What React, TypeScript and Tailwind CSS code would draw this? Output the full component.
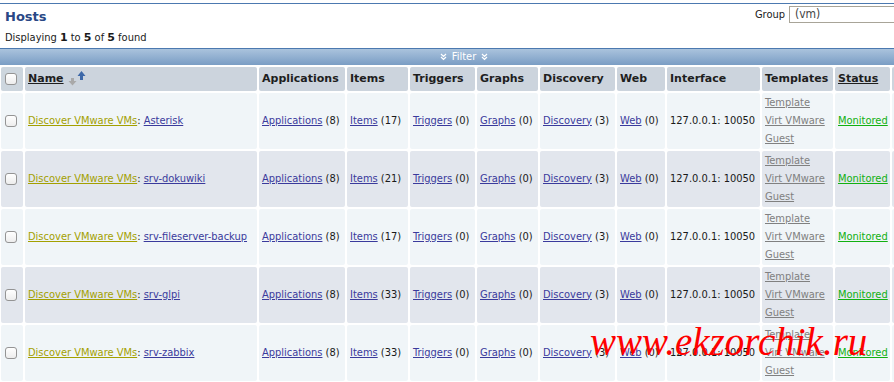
import React from "react";

const hosts = [
  { name: "Asterisk", items: 17 },
  { name: "srv-dokuwiki", items: 21 },
  { name: "srv-fileserver-backup", items: 17 },
  { name: "srv-glpi", items: 33 },
  { name: "srv-zabbix", items: 33 },
];

const body = "font-['DejaVu_Sans_Condensed','Liberation_Sans',sans-serif] text-[11px]";
const bold = "font-['DejaVu_Sans',sans-serif] font-bold text-[11px]";

function Checkbox() {
  return (
    <span className="block w-[12px] h-[12px] ml-[4px] rounded-[3px] border border-[#949494] bg-gradient-to-b from-white to-[#ededed]" />
  );
}

function SortArrows() {
  return (
    <svg width="18" height="16" viewBox="0 0 18 16" className="inline-block align-[-4px] ml-[4px]">
      <path d="M3 8v3H0.5L4.5 15.5l4-4.5H6V8z" fill="#a9a9a9" />
      <path d="M12 10V6H9.5L13.5 1l4 5H15v4z" fill="#3d68a8" />
    </svg>
  );
}

function Chevrons() {
  return (
    <svg width="7" height="8" viewBox="0 0 7 8" className="inline-block">
      <path d="M1 1l2.5 2.5L6 1M1 4l2.5 2.5L6 4" stroke="#fff" strokeWidth="1.2" fill="none" />
    </svg>
  );
}

function Link({ children, className = "text-[#3a3a9c]" }: { children: React.ReactNode; className?: string }) {
  return <a className={`underline ${className}`}>{children}</a>;
}

export default function App() {
  const th = `${bold} text-[#1e1e1e] bg-[#ccd4dd] rounded-[2px] px-[3px] h-[24px] text-left whitespace-nowrap`;
  return (
    <div className={`relative w-[894px] h-[382px] overflow-hidden bg-white text-[#1a1a1a] ${body}`}>
      <div className="w-[928px]">
        <div className="mt-[3px] h-[46px] border-y border-[#4c79b0] flex justify-between px-[5px]">
          <div>
            <div className="pt-[5px] font-['DejaVu_Sans',sans-serif] font-bold text-[13px] leading-[16px] text-[#2a4785]">
              Hosts
            </div>
            <div className="mt-[6px] leading-[14px]">
              Displaying <b className={bold}>1</b> to <b className={bold}>5</b> of <b className={bold}>5</b> found
            </div>
          </div>
          <div className="flex items-start gap-[4px] pt-[2px]">
            <span className="leading-[17px]">Group</span>
            <div className="w-[134px] h-[17px] border border-[#a8a498] pl-[5px] leading-[15px] text-[12px] text-[#444]">
              (vm)
            </div>
          </div>
        </div>

        <div className="h-[16px] bg-gradient-to-b from-[#aac3dd] to-[#7a9dc4] flex items-center justify-center gap-[5px] text-white">
          <Chevrons />
          <span className="leading-[14px]">Filter</span>
          <Chevrons />
        </div>

        <table className="table-fixed border-separate border-spacing-[2px] -ml-[1px] w-[930px]">
          <colgroup>
            <col className="w-[22px]" />
            <col className="w-[232px]" />
            <col className="w-[86px]" />
            <col className="w-[61px]" />
            <col className="w-[65px]" />
            <col className="w-[61px]" />
            <col className="w-[75px]" />
            <col className="w-[48px]" />
            <col className="w-[93px]" />
            <col className="w-[71px]" />
            <col className="w-[55px]" />
            <col />
          </colgroup>
          <thead>
            <tr>
              <th className="bg-[#cdd6de] rounded-[2px]">
                <Checkbox />
              </th>
              <th className={`${th} bg-[#bdc9d4]`}>
                <span className="underline">Name</span>
                <SortArrows />
              </th>
              <th className={th}>Applications</th>
              <th className={th}>Items</th>
              <th className={th}>Triggers</th>
              <th className={th}>Graphs</th>
              <th className={th}>Discovery</th>
              <th className={th}>Web</th>
              <th className={th}>Interface</th>
              <th className={th}>Templates</th>
              <th className={`${th} bg-[#bdc9d4]`}>
                <span className="underline">Status</span>
              </th>
              <th className={th}></th>
            </tr>
          </thead>
          <tbody>
            {hosts.map((h, i) => {
              const bg = i % 2 === 0 ? "bg-[#f0f5f8]" : "bg-[#e2e6ed]";
              const td = `${bg} rounded-[2px] px-[3px] h-[56px] align-middle whitespace-nowrap`;
              return (
                <tr key={h.name}>
                  <td className={`${bg} rounded-[2px] align-middle`}>
                    <Checkbox />
                  </td>
                  <td className={td}>
                    <Link className="text-[#a3a000]">Discover VMware VMs</Link>: <Link>{h.name}</Link>
                  </td>
                  <td className={td}>
                    <Link>Applications</Link> (8)
                  </td>
                  <td className={td}>
                    <Link>Items</Link> ({h.items})
                  </td>
                  <td className={td}>
                    <Link>Triggers</Link> (0)
                  </td>
                  <td className={td}>
                    <Link>Graphs</Link> (0)
                  </td>
                  <td className={td}>
                    <Link>Discovery</Link> (3)
                  </td>
                  <td className={td}>
                    <Link>Web</Link> (0)
                  </td>
                  <td className={td}>127.0.0.1: 10050</td>
                  <td className={`${bg} rounded-[2px] px-[3px] py-[1px] leading-[18px] align-top`}>
                    <Link className="text-[#808080]">Template Virt VMware Guest</Link>
                  </td>
                  <td className={td}>
                    <Link className="text-[#11b011]">Monitored</Link>
                  </td>
                  <td className={td}></td>
                </tr>
              );
            })}
          </tbody>
        </table>
      </div>

      <div className="absolute left-[590px] top-[322px] font-['Liberation_Serif',serif] italic text-[39px] leading-[39px] text-[#ff0000] whitespace-nowrap">
        www.ekzorchik.ru
      </div>
    </div>
  );
}
